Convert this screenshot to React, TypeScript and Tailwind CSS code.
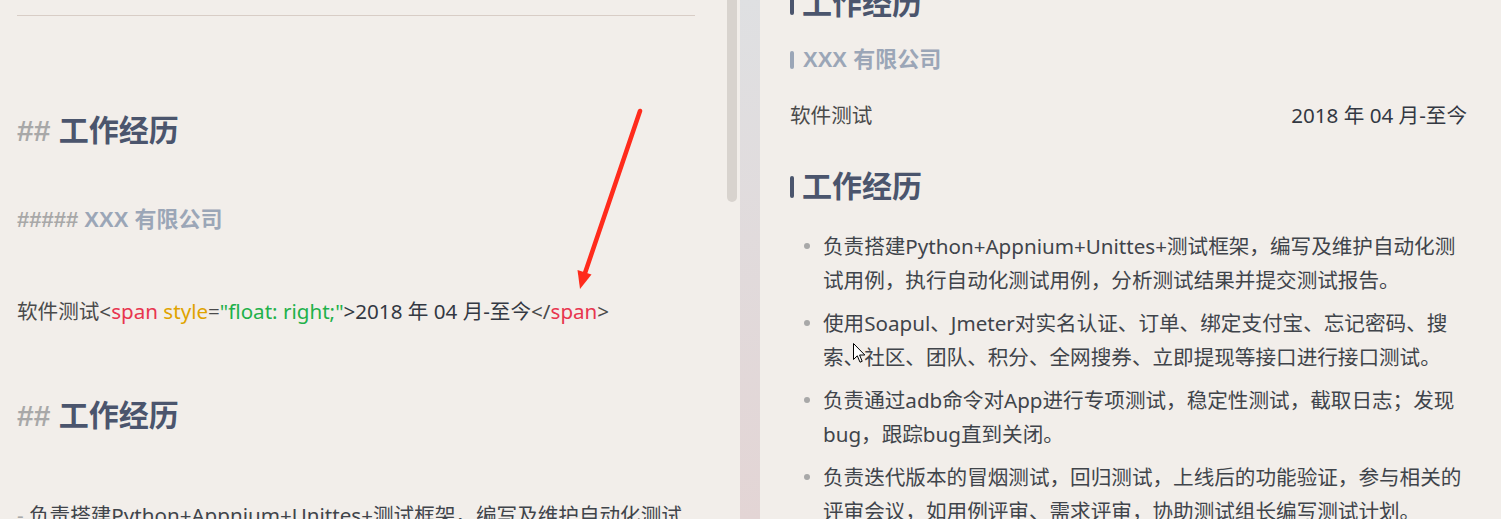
import React from "react";

const font = "font-['Noto_Sans','Noto_Sans_CJK_SC',sans-serif]";
const headFont = "font-['Liberation_Sans','Noto_Sans_CJK_SC',sans-serif]";

function Bar({ tall, color }: { tall: string; color: string }) {
    return <span className={`inline-block w-[4px] rounded-full ${tall} ${color}`} />;
}

const items: string[][] = [
    ["负责搭建Python+Appnium+Unittes+测试框架，编写及维护自动化测", "试用例，执行自动化测试用例，分析测试结果并提交测试报告。"],
    ["使用Soapul、Jmeter对实名认证、订单、绑定支付宝、忘记密码、搜", "索、社区、团队、积分、全网搜券、立即提现等接口进行接口测试。"],
    ["负责通过adb命令对App进行专项测试，稳定性测试，截取日志；发现", "bug，跟踪bug直到关闭。"],
    ["负责迭代版本的冒烟测试，回归测试，上线后的功能验证，参与相关的", "评审会议，如用例评审、需求评审，协助测试组长编写测试计划。"],
];

function SourcePane() {
    return (
        <div className="w-[727px] shrink-0 overflow-hidden pl-[17px] flex flex-col">
            <div className="mt-[15px] h-px w-[678px] shrink-0 bg-[#d8cdc6]" />
            <div className={`mt-[95px] leading-[40px] text-[30px] font-bold text-[#4b556d] whitespace-nowrap ${headFont}`}>
                <span className="text-[#a8a8a8]">##</span> 工作经历
            </div>
            <div className={`mt-[54px] leading-[30px] text-[22px] font-bold text-[#9ba6b7] whitespace-nowrap ${headFont}`}>
                <span className="text-[#a8a8a8]">#####</span> XXX 有限公司
            </div>
            <div className="mt-[61px] leading-[30px] text-[20.6px] text-[#4a4a4a] whitespace-nowrap">
                软件测试&lt;<span className="text-[#e8354f]">span</span>{" "}
                <span className="text-[#e0a300]">style</span>=
                <span className="text-[#1fb14b]">"float: right;"</span>
                <span className="text-[#333842]">&gt;2018 年 04 月-至今</span>&lt;/
                <span className="text-[#e8354f]">span</span>&gt;
            </div>
            <div className={`mt-[70px] leading-[40px] text-[30px] font-bold text-[#4b556d] whitespace-nowrap ${headFont}`}>
                <span className="text-[#a8a8a8]">##</span> 工作经历
            </div>
            <div className="mt-[62px] leading-[34px] text-[20.6px] text-[#40444a] whitespace-nowrap">
                <span className="text-[#a8a8a8]">-</span> 负责搭建Python+Appnium+Unittes+测试框架，编写及维护自动化测试
            </div>
        </div>
    );
}

function PreviewPane() {
    return (
        <div className="flex-1 overflow-hidden pl-[30px] pr-[34px] flex flex-col">
            <div className={`-mt-[16px] flex items-center gap-[8px] leading-[40px] text-[30px] font-bold text-[#4b556d] whitespace-nowrap ${headFont}`}>
                <Bar tall="h-[22px]" color="bg-[#4b556d]" />
                工作经历
            </div>
            <div className={`mt-[21px] flex items-center gap-[9px] leading-[30px] text-[22px] font-bold text-[#9ba6b7] whitespace-nowrap ${headFont}`}>
                <Bar tall="h-[18px]" color="bg-[#9ba6b7]" />
                XXX 有限公司
            </div>
            <div className="mt-[25px] flex justify-between leading-[30px] text-[20.6px] text-[#4a4a4a] whitespace-nowrap">
                <span>软件测试</span>
                <span className="text-[#333842]">2018 年 04 月-至今</span>
            </div>
            <div className={`mt-[37px] flex items-center gap-[8px] leading-[40px] text-[30px] font-bold text-[#4b556d] whitespace-nowrap ${headFont}`}>
                <Bar tall="h-[22px]" color="bg-[#4b556d]" />
                工作经历
            </div>
            <ul className="mt-[22px] flex flex-col gap-[9px] text-[20.6px] leading-[34px] text-[#40444a]">
                {items.map((lines, i) => (
                    <li key={i} className="flex">
                        <div className="w-[33px] shrink-0 h-[34px] flex items-center pl-[14px]">
                            <span className="w-[6px] h-[6px] rounded-full bg-[#a8a8a8]" />
                        </div>
                        <div className="whitespace-nowrap">
                            {lines[0]}
                            <br />
                            {lines[1]}
                        </div>
                    </li>
                ))}
            </ul>
        </div>
    );
}

export default function App() {
    return (
        <div className={`relative flex h-[519px] w-[1501px] overflow-hidden bg-[#f2eeea] ${font}`}>
            <SourcePane />
            <div className="w-[10px] shrink-0">
                <div className="h-[202px] rounded-b-[5px] bg-[#d8d3ce]" />
            </div>
            <div className="w-[3px] shrink-0" />
            <div className="w-[20px] shrink-0 bg-gradient-to-b from-[#dfe0e2] to-[#e3d5d5]" />
            <PreviewPane />

            {/* red annotation arrow */}
            <svg className="absolute left-0 top-0 pointer-events-none" width="1501" height="519">
                <line x1="640" y1="111" x2="584" y2="276" stroke="#ff2b1c" strokeWidth="4.5" strokeLinecap="round" />
                <polygon points="580,289 591.5,274.5 577.5,270" fill="#ff2b1c" />
            </svg>

            {/* mouse pointer */}
            <svg className="absolute left-[853px] top-[343px] pointer-events-none" width="13" height="21" viewBox="0 0 13 21">
                <path d="M0.5 0.5 L0.5 16.5 L4.3 12.8 L7 19.2 L9.2 18.3 L6.6 12 L11.8 12 Z" fill="#fff" stroke="#000" strokeWidth="1" strokeLinejoin="round" />
            </svg>
        </div>
    );
}
